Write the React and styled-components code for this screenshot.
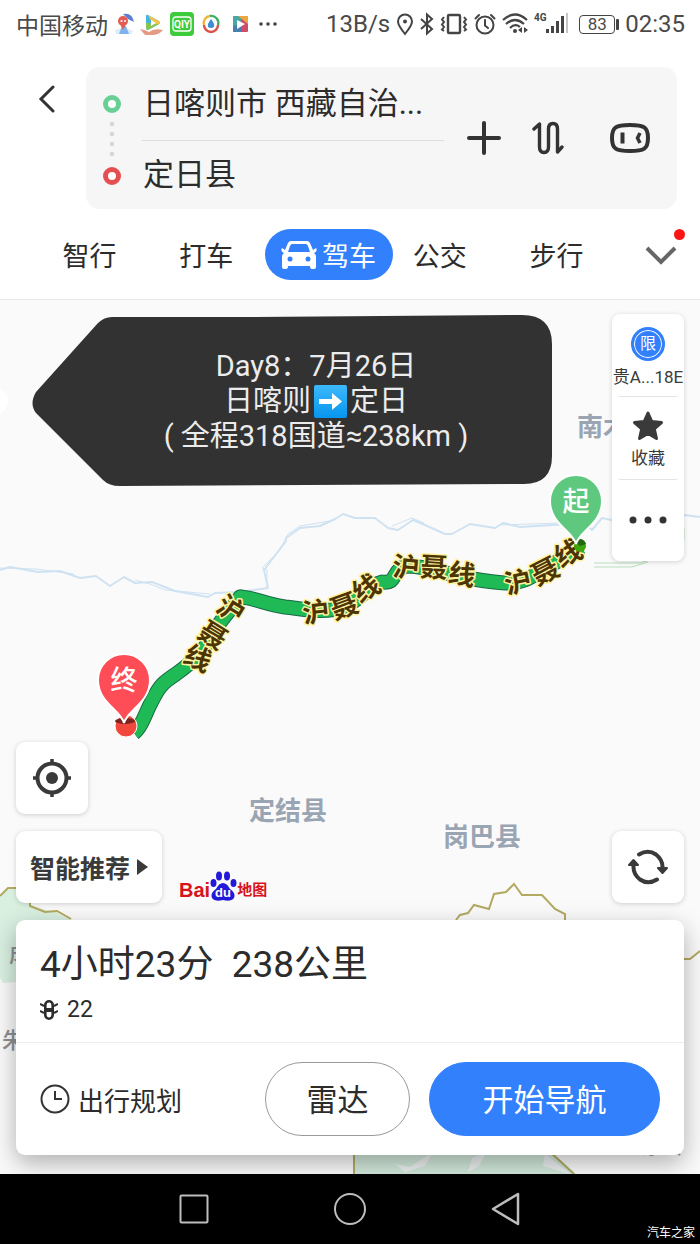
import React from "react";
import styled, { createGlobalStyle } from "styled-components";

const Global = createGlobalStyle`
  * { box-sizing: border-box; }
  body {
    margin: 0;
    background: #fff;
    color: #2c2c2c;
    font-family: Roboto, "Noto Sans CJK SC", sans-serif;
    font-weight: 400;
  }
  button, input { font: inherit; color: inherit; }
  button { padding: 0; border: 0; background: none; cursor: pointer; }
  svg { display: block; flex: none; }
`;

const Page = styled.div`
  display: flex;
  flex-direction: column;
  min-height: 100vh;
`;

/* ---------- header ---------- */

const Header = styled.header`
  background: #fff;
  border-bottom: 1px solid #e6e6e6;
  padding-bottom: 19px;
`;

const StatusBar = styled.div`
  display: flex;
  align-items: center;
  justify-content: space-between;
  height: 48px;
  padding: 0 15px 0 16px;
  font-size: 24px;
  color: #4a4a4a;
`;

const StatusGroup = styled.div`
  display: flex;
  align-items: center;
  gap: 6px;
`;

const Carrier = styled.span`
  font-size: 23px;
`;

const Battery = styled.span`
  position: relative;
  width: 36px;
  height: 19px;
  margin: 0 4px 0 3px;
  border: 1px solid #444;
  border-radius: 4px;
  font-size: 17px;
  line-height: 17px;
  text-align: center;
  &::after {
    content: "";
    position: absolute;
    top: 3px;
    right: -5px;
    width: 3px;
    height: 11px;
    background: #444;
    border-radius: 1px;
  }
`;

const SearchRow = styled.div`
  display: flex;
  align-items: flex-start;
  padding: 19px 23px 0 32px;
`;

const BackButton = styled.button`
  width: 30px;
  height: 64px;
  display: grid;
  place-items: center;
`;

const RouteBox = styled.form`
  flex: 1;
  min-width: 0;
  display: flex;
  align-items: center;
  height: 142px;
  margin-left: 24px;
  padding: 0 26px 0 16px;
  background: #f6f6f6;
  border-radius: 14px;
`;

const Fields = styled.div`
  flex: 1;
  min-width: 0;
  margin: 0 23px 0 20px;
`;

const PlaceInput = styled.input`
  display: block;
  width: 100%;
  height: 73px;
  padding: 0 0 7px 1px;
  border: 0;
  outline: 0;
  background: none;
  font-size: 31px;
  text-overflow: ellipsis;
  & + & {
    height: 69px;
    border-top: 1px solid #dedede;
  }
`;

const BoxActions = styled.div`
  display: grid;
  grid-template-columns: 34px 32px 56px;
  column-gap: 31px;
  align-items: center;
  & > :last-child { justify-self: end; }
`;

const IconButton = styled.button`
  display: grid;
  place-items: center;
`;

const Tabs = styled.nav`
  display: grid;
  grid-template-columns: repeat(5, minmax(0, 1fr)) 85px;
  align-items: center;
  height: 51px;
  margin-top: 20px;
  padding-left: 31px;
`;

const Tab = styled.button`
  display: flex;
  align-items: center;
  justify-content: center;
  gap: 5px;
  width: ${(p) => (p.$active ? "128px" : "100%")};
  height: 51px;
  border-radius: 26px;
  font-size: 27px;
  color: ${(p) => (p.$active ? "#fff" : "#2c2c2c")};
  background: ${(p) => (p.$active ? "#3280fc" : "transparent")};
`;

const MoreTab = styled.button`
  position: relative;
  display: grid;
  place-items: center;
  width: 40px;
  height: 51px;
  margin-left: 26px;
`;

const RedDot = styled.span`
  position: absolute;
  top: 0;
  right: -4px;
  width: 11px;
  height: 11px;
  border-radius: 50%;
  background: #fb1414;
`;

/* ---------- map ---------- */

const MapArea = styled.main`
  position: relative;
  flex: 1;
  display: flex;
  flex-direction: column;
  justify-content: space-between;
  gap: 120px;
  padding: 14px 16px 19px;
  background: #fafafa;
  overflow: hidden;
`;

const MapCanvas = styled.svg`
  position: absolute;
  inset: 0;
  width: 100%;
  height: 100%;
`;

const TopOverlay = styled.div`
  position: relative;
  display: flex;
  justify-content: space-between;
  align-items: flex-start;
  padding-left: 16px;
`;

const Callout = styled.section`
  position: relative;
  width: 520px;
  height: 172px;
  padding: 35px 0 0 48px;
  color: #ececec;
  font-size: 29px;
  line-height: 35px;
  text-align: center;
`;

const CalloutShape = styled.svg`
  position: absolute;
  inset: 0;
`;

const CalloutLine = styled.div`
  position: relative;
  display: flex;
  align-items: center;
  justify-content: center;
  gap: 3px;
  white-space: pre;
`;

const SidePanel = styled.aside`
  width: 72px;
  height: 247px;
  display: grid;
  grid-template-rows: repeat(3, minmax(0, 1fr));
  justify-items: center;
  background: #fff;
  border-radius: 8px;
  box-shadow: 0 1px 5px rgba(0, 0, 0, 0.16);
`;

const SideItem = styled.button`
  display: flex;
  flex-direction: column;
  align-items: center;
  justify-content: center;
  gap: 3px;
  width: 58px;
  font-size: 17px;
  line-height: 26px;
  white-space: nowrap;
  color: #3a3a3a;
  &:not(:last-child) { padding-top: 6px; }
  & + & { border-top: 1px solid #e4e4e4; }
`;

const LimitBadge = styled.span`
  display: grid;
  place-items: center;
  width: 34px;
  height: 34px;
  border-radius: 50%;
  border: 3px solid #3280fc;
  background: #3280fc;
  box-shadow: inset 0 0 0 1px #fff;
  color: #fff;
  font-size: 16px;
  line-height: 1;
`;

const BottomOverlay = styled.div`
  position: relative;
  display: flex;
  flex-direction: column;
  gap: 17px;
`;

const ToolRow = styled.div`
  display: flex;
  align-items: flex-end;
  gap: 17px;
`;

const FloatButton = styled.button`
  display: flex;
  align-items: center;
  justify-content: center;
  gap: 7px;
  width: ${(p) => (p.$wide ? "146px" : "72px")};
  height: 72px;
  background: #fff;
  border-radius: 9px;
  box-shadow: 0 1px 5px rgba(0, 0, 0, 0.18);
  font-size: 25px;
  font-weight: 700;
  color: #3a3a3a;
  ${(p) => p.$end && "margin-left: auto;"}
`;

const Logo = styled.div`
  display: flex;
  align-items: flex-end;
  height: 32px;
  margin-bottom: 2px;
  color: #d7141a;
  font-family: "Liberation Sans", "Noto Sans CJK SC", sans-serif;
  font-weight: 700;
  font-size: 20px;
  line-height: 22px;
`;

const LogoMap = styled.span`
  font-size: 15px;
`;

const TripCard = styled.section`
  background: #fff;
  border-radius: 9px;
  box-shadow: 0 8px 24px rgba(0, 0, 0, 0.3);
`;

const TripSummary = styled.div`
  height: 123px;
  padding: 21px 24px 0;
  border-bottom: 1px solid #ececec;
`;

const TripTitle = styled.h1`
  margin: 0;
  font-size: 37px;
  font-weight: 400;
  line-height: 48px;
  white-space: pre;
`;

const Lights = styled.p`
  display: flex;
  align-items: center;
  gap: 9px;
  margin: 8px 0 0;
  font-size: 23px;
  line-height: 26px;
`;

const TripActions = styled.div`
  display: flex;
  align-items: center;
  gap: 19px;
  padding: 19px 24px;
`;

const PlanButton = styled.button`
  display: flex;
  align-items: center;
  gap: 8px;
  margin-right: auto;
  font-size: 26px;
  white-space: nowrap;
`;

const PillButton = styled.button`
  width: ${(p) => (p.$primary ? "231px" : "145px")};
  height: 74px;
  padding-bottom: 4px;
  border-radius: 37px;
  border: 1px solid ${(p) => (p.$primary ? "#3280fc" : "#9a9a9a")};
  background: ${(p) => (p.$primary ? "#3280fc" : "#fff")};
  color: ${(p) => (p.$primary ? "#fff" : "#2c2c2c")};
  font-size: 31px;
`;

/* ---------- system navigation ---------- */

const SystemNav = styled.footer`
  position: relative;
  display: flex;
  align-items: center;
  justify-content: center;
  gap: 120px;
  height: 70px;
  background: #000;
`;

const NavButton = styled.button`
  display: grid;
  place-items: center;
  width: 36px;
  height: 36px;
`;

const Watermark = styled.span`
  position: absolute;
  right: 5px;
  bottom: 2px;
  color: #fff;
  font-size: 12px;
  line-height: 18px;
`;

/* ---------- drawings ---------- */

const AppIcons = () => (
  <>
    <svg width="20" height="24" viewBox="0 0 20 24">
      <path d="M9 2 Q18 0 20 10 L14 7Z" fill="#5b7fd0" />
      <path d="M1 18 Q10 14 19 19 L17 22 H2Z" fill="#dcecf8" />
      <path d="M8 14 h4 l3 8 h-10z" fill="#7fb2ee" />
      <circle cx="9" cy="9" r="5" fill="#e35b55" />
      <path d="M6 12h6l-3 6z" fill="#e35b55" />
      <circle cx="7.500" cy="9" r="1" fill="#fff" /><circle cx="11" cy="9" r="1" fill="#fff" />
    </svg>
    <svg width="24" height="24" viewBox="0 0 24 24">
      <path d="M6 4 Q6 2 8 3 L19 9 Q21 11 19 12 L8 18 Q6 18 6 16Z" fill="#45b5e8" />
      <path d="M8 3 L19 9 Q21 11 19 12 L14 14Z" fill="#f2c44c" />
      <path d="M6 11 L19 12 L8 18 Q6 18 6 16Z" fill="#8bc454" />
      <path d="M11 8l5 3-5 3z" fill="#fff" />
      <path d="M0 17 Q6 18 9 20 Q14 16 23 18 Q19 23 12 23 H5Z" fill="#e39b86" />
    </svg>
    <svg width="24" height="24" viewBox="0 0 24 24">
      <rect x="0" y="0" width="24" height="24" rx="4" fill="#3dcb3c" />
      <rect x="3" y="5" width="18" height="14" rx="3" fill="none" stroke="#fff" strokeWidth="1.3" />
      <text x="12" y="16" fontSize="10" fontWeight="700" fill="#fff" textAnchor="middle">QIY</text>
    </svg>
    <svg width="24" height="24" viewBox="-1 0 24 24">
      <path d="M3 13 A7 7 0 0 1 9 4" fill="none" stroke="#f0b33a" strokeWidth="2.4" />
      <path d="M9 4 A7 7 0 0 1 17 13" fill="none" stroke="#3bb06b" strokeWidth="2.4" />
      <path d="M17 13 A7 7 0 0 1 3 13" fill="none" stroke="#d9534a" strokeWidth="2.4" />
      <path d="M10 7 Q14 12 13 15 Q10 17 7 15 Q6 12 10 7" fill="#3d8fd4" />
    </svg>
    <svg width="22" height="24" viewBox="2 0 22 24">
      <rect x="5" y="4" width="15" height="16" rx="1" fill="#cf4d68" />
      <path d="M5 4h9l-2 8-7 8z" fill="#4aa7a6" />
      <path d="M10 4h10v8z" fill="#f0a63f" />
      <path d="M5 14l8-2v8H5z" fill="#4a7fae" />
      <path d="M9 8l8 4-8 5z" fill="#fff" />
    </svg>
    <svg width="20" height="24" viewBox="0 0 20 24" fill="#444">
      <circle cx="3" cy="12" r="1.8" /><circle cx="10" cy="12" r="1.8" /><circle cx="17" cy="12" r="1.8" />
    </svg>
  </>
);

const SignalIcons = () => (
  <>
    <svg width="18" height="24" viewBox="0 0 18 24" fill="none" stroke="#444" strokeWidth="2">
      <path d="M9 22 C5 17 2 13 2 9.500 A7 7 0 0 1 16 9.500 C16 13 13 17 9 22Z" />
      <circle cx="9" cy="9.500" r="2" fill="#444" stroke="none" />
    </svg>
    <svg width="14" height="24" viewBox="0 0 14 24" fill="none" stroke="#444" strokeWidth="2">
      <path d="M1 7 L12 17 L7 21.500 V2.500 L12 7 L1 17" />
    </svg>
    <svg width="28" height="24" viewBox="0 0 28 24" fill="none" stroke="#444" strokeWidth="2">
      <rect x="8" y="3" width="12" height="18" rx="1" strokeWidth="2.400" />
      <path d="M4 5 L2 7.500 L4 10 L2 12.500 L4 15 L2 17.500 L4 19 M24 5 L26 7.500 L24 10 L26 12.500 L24 15 L26 17.500 L24 19" />
    </svg>
    <svg width="22" height="24" viewBox="0 0 22 24" fill="none" stroke="#444" strokeWidth="2" strokeLinecap="round">
      <circle cx="11" cy="13" r="8.500" />
      <path d="M11 8v5.500l3 2.500M1.500 6.500L5 3M20.500 6.500L17 3" />
    </svg>
    <svg width="26" height="24" viewBox="0 0 26 24" fill="none" stroke="#444" strokeWidth="2.200">
      <path d="M1 8 Q13 -3 25 8M4 12 Q13 4 22 12M8 16 Q13 11 18 15" />
      <circle cx="13" cy="19" r="2" fill="#444" stroke="none" />
      <path d="M20 15v6l-4-3zM22 15v6l4-3z" fill="#444" stroke="none" />
    </svg>
    <svg width="36" height="24" viewBox="0 0 36 24" fill="#444">
      <text x="0" y="9" fontSize="10" fontWeight="700">4G</text>
      <rect x="12" y="17" width="3" height="4" /><rect x="17" y="14" width="3" height="7" />
      <rect x="22" y="9" width="3" height="12" /><rect x="27" y="4" width="3" height="17" />
      <rect x="32" y="1" width="2" height="20" fill="#c6c6c6" />
    </svg>
  </>
);

const roadLabels = [
  [231, 609, 32, "沪"], [213, 635, 32, "聂"], [198, 658, 24, "线"],
  [316, 612, -6, "沪"], [344, 606, -20, "聂"], [366, 588, -32, "线"],
  [406, 567, 5, "沪"], [434, 567, 3, "聂"], [462, 574, 10, "线"],
  [518, 582, -12, "沪"], [545, 571, -27, "聂"], [568, 553, -28, "线"],
];

const routePath =
  "M134 733 C142 727 146 711 153 699 C160 685 164 682 176 674 C190 664 205 651 212 635 C220 620 230 611 240 597 C252 597 265 604 285 607 C305 609 325 614 343 607 C362 600 368 585 382 582 C398 585 392 567 408 566 C430 566 450 576 472 579 C495 582 510 586 527 579 C548 569 565 555 582 547";

const Pin = ({ x, y, color, label }) => (
  <g transform={`translate(${x} ${y})`}>
    <path d="M0 43 C-3 30 -26 23 -26 0 A26 26 0 0 1 26 0 C26 23 3 30 0 43Z" fill={color} stroke="#fff" strokeWidth="2" />
    <text y="10" fontSize="27" fontWeight="500" fill="#fff" textAnchor="middle">{label}</text>
  </g>
);

const MapDrawing = () => (
  <MapCanvas viewBox="0 300 700 874" preserveAspectRatio="xMidYMin slice" role="img" aria-label="路线地图">
    <circle cx="-6" cy="401" r="14" fill="#fff" />
    <g fill="none" stroke="#cfe2f2" strokeWidth="2" strokeLinejoin="round">
      <path d="M0 570 L10 567 L38 572 L60 571 L80 578 L96 576 L110 586 L124 577 L135 583 L152 582 L175 591 L208 597 L215 593 L240 592 L268 588 L264 570 L286 541 L286 538 L300 528 L320 526 L335 519 L343 514 L355 518 L375 518 L388 528 L398 530 L413 520 L425 525 L445 534 L452 534 L470 524 L495 528 L503 523 L520 527 L585 523 L592 530 L602 518 L630 524 L684 515 L700 517" />
      <path d="M0 568 L36 569 L74 574 M135 580 L150 584 L165 590 L210 594 M267 588 L267 570 L262 568 L280 550 L288 534 L300 526 L330 521 M392 526 L412 518 L424 523 M500 525 L560 523" strokeWidth="1" />
    </g>
    <path d="M594 563 L640 563 L684 549 M594 567 L632 567 L648 562 M684 540 V528" fill="none" stroke="#b9dfbd" strokeWidth="1" />

    <path d="M0 897 L7 889 H30 V905 L57 913 L70 920 V978 L3 983 L0 978Z" fill="#d9f0e1" />
    <path d="M354 1150 H550 L576 1174 H354Z" fill="#d2e8db" />
    <path d="M395 1164 L410 1167 L433 1152 L425 1166 L405 1172Z M472 1158 L486 1152 L479 1166 L468 1172Z M545 1154 L570 1174 L543 1166Z" fill="#eceff0" />
    <g fill="none" stroke="#b3a960" strokeWidth="2">
      <path d="M0 896 L8 888 H30 V906 L45 912 L57 911 L71 919" />
      <path d="M456 920 L460 915 L468 913 L474 905 L489 909 L494 894 L506 892 L514 884 L522 895 L542 895 L555 909 L565 914 V920" />
      <path d="M684 959 H690 L700 951 M354 1150 V1174 M550 1152 L574 1174" />
    </g>
    <g fontSize="26" fontWeight="700" fill="#9aa5b3">
      <text x="577" y="436">南木林县</text>
      <text x="249" y="820">定结县</text>
      <text x="443" y="846">岗巴县</text>
    </g>
    <g fontSize="22" fontWeight="500" fill="#8d8f92">
      <text x="9" y="962">成</text>
      <text x="2" y="1048">朱</text>
      <text x="622" y="1154" fontSize="20">亚东县</text>
    </g>

    <g fill="none" strokeLinejoin="round" strokeLinecap="round">
      <path d={routePath} stroke="#176b45" strokeWidth="15" strokeLinecap="butt" />
      <circle cx="241" cy="597" r="7" fill="#1fb955" stroke="#176b45" strokeWidth="1" />
      <path d={routePath} stroke="#1fb955" strokeWidth="13" strokeLinecap="butt" />
    </g>
    {roadLabels.map(([x, y, r, t]) => (
      <text
        key={`${x}-${y}`}
        transform={`translate(${x} ${y}) rotate(${r})`}
        y="10"
        textAnchor="middle"
        fontSize="27"
        fontWeight="700"
        fill="#4d3404"
        stroke="#fff3a0"
        strokeWidth="3"
        strokeLinejoin="round"
        paintOrder="stroke"
      >
        {t}
      </text>
    ))}
    <circle cx="580" cy="546" r="6" fill="#3ea50c" />
    <path d="M580 546 L574 541 A7 7 0 0 1 586 544Z" fill="#23680c" />
    <Pin x={576} y={501} color="#5ec97e" label="起" />
    <circle cx="126" cy="726" r="11" fill="#f2473c" stroke="#fff" strokeWidth="1" />
    <ellipse cx="125" cy="721" rx="10" ry="3" fill="#7d2420" />
    <Pin x={124} y={680} color="#fe4d56" label="终" />
  </MapCanvas>
);

export default function App() {
  return (
    <Page>
      <Global />
      <Header>
        <StatusBar>
          <StatusGroup>
            <Carrier>中国移动</Carrier>
            <AppIcons />
          </StatusGroup>
          <StatusGroup>
            <span>13B/s</span>
            <SignalIcons />
            <Battery>83</Battery>
            <span>02:35</span>
          </StatusGroup>
        </StatusBar>

        <SearchRow>
          <BackButton aria-label="返回">
            <svg width="18" height="28" viewBox="0 0 18 28" fill="none" stroke="#333" strokeWidth="3" strokeLinecap="round">
              <path d="M15 2 L3 14 L15 26" />
            </svg>
          </BackButton>
          <RouteBox>
            <svg width="20" height="96" viewBox="0 0 20 96" fill="none">
              <circle cx="10" cy="14" r="6.500" fill="#fff" stroke="#68cf95" strokeWidth="5" />
              <g fill="#d6d6d6">
                <circle cx="10" cy="34" r="2.300" /><circle cx="10" cy="44" r="2.300" />
                <circle cx="10" cy="54" r="2.300" /><circle cx="10" cy="64" r="2.300" />
              </g>
              <circle cx="10" cy="86" r="6.500" fill="#fff" stroke="#e54f4f" strokeWidth="5" />
            </svg>
            <Fields>
              <PlaceInput aria-label="起点" defaultValue="日喀则市 西藏自治..." />
              <PlaceInput aria-label="终点" defaultValue="定日县" />
            </Fields>
            <BoxActions>
              <IconButton type="button" aria-label="添加途经点">
                <svg width="34" height="34" viewBox="0 0 34 34" stroke="#333" strokeWidth="4" strokeLinecap="round">
                  <path d="M17 2V32M2 17H32" />
                </svg>
              </IconButton>
              <IconButton type="button" aria-label="交换起终点">
                <svg width="32" height="34" viewBox="0 0 32 34" fill="none" stroke="#333" strokeWidth="3.400" strokeLinecap="round" strokeLinejoin="round">
                  <path d="M2 8 L7.500 3 V26 Q7.500 31.500 12 31.500 Q16.500 31.500 16.500 26 V8 Q16.500 2.500 21 2.500 Q25.500 2.500 25.500 8 V31 L30 26" />
                </svg>
              </IconButton>
              <IconButton type="button" aria-label="语音助手">
                <svg width="42" height="32" viewBox="0 0 42 32" fill="none" stroke="#333" strokeWidth="4">
                  <path d="M21 3 C35 3 39 5 39 16 C39 27 35 29 21 29 C7 29 3 27 3 16 C3 5 7 3 21 3Z" />
                  <path d="M13.500 10.500V21.500" />
                  <path d="M31 11 L28.500 16 L31 21" strokeWidth="3.500" />
                </svg>
              </IconButton>
            </BoxActions>
          </RouteBox>
        </SearchRow>

        <Tabs>
          <Tab>智行</Tab>
          <Tab>打车</Tab>
          <Tab $active>
            <svg width="36" height="30" viewBox="0 0 36 30">
              <path fill="#fff" fillRule="evenodd" d="M10 1 H26 Q28 1 29 3 L32 10 L35 8 Q37 11 33 13 Q35 14 35 17 V27 Q35 29 33 29 H31 Q29 29 29 26 H7 Q7 29 5 29 H3 Q1 29 1 27 V17 Q1 14 3 13 Q-1 11 1 8 L4 10 L7 3 Q8 1 10 1Z M11 4 Q10 4 9 6 L7 12 H29 L27 6 Q26 4 25 4Z" />
              <circle cx="9" cy="19" r="2.500" fill="#3280fc" /><circle cx="27" cy="19" r="2.500" fill="#3280fc" />
            </svg>
            驾车
          </Tab>
          <Tab>公交</Tab>
          <Tab>步行</Tab>
          <MoreTab aria-label="更多">
            <svg width="34" height="20" viewBox="0 0 34 20" fill="none" stroke="#666" strokeWidth="4">
              <path d="M3 3 L17 17 L31 3" />
            </svg>
            <RedDot />
          </MoreTab>
        </Tabs>
      </Header>

      <MapArea>
        <MapDrawing />
        <TopOverlay>
          <Callout>
            <CalloutShape width="520" height="173" viewBox="0 0 520 173">
              <path d="M80 3 H210 L490 1 Q520 1 520 30 V142 Q520 170 492 170 L88 172 Q77 172 71 166 L4 99 Q-3 90 4 78 L66 9 Q72 3 80 3Z" fill="#323232" />
            </CalloutShape>
            <CalloutLine>Day8：7月26日</CalloutLine>
            <CalloutLine>
              日喀则
              <svg width="33" height="33" viewBox="0 0 33 33" role="img" aria-label="➡">
                <defs>
                  <linearGradient id="arrowFill" x1="0" y1="0" x2="0" y2="1">
                    <stop offset="0" stopColor="#3db9fb" /><stop offset="1" stopColor="#0695ee" />
                  </linearGradient>
                </defs>
                <rect width="33" height="33" rx="2" fill="url(#arrowFill)" />
                <path d="M5 14H18V8L28 16.500L18 25V19H5Z" fill="#fff" />
              </svg>
              定日
            </CalloutLine>
            <CalloutLine>( 全程318国道≈238km )</CalloutLine>
          </Callout>

          <SidePanel>
            <SideItem>
              <LimitBadge>限</LimitBadge>
              贵A...18E
            </SideItem>
            <SideItem>
              <svg width="32" height="32" viewBox="0 0 32 32" fill="#3a3a3a" stroke="#3a3a3a" strokeWidth="3" strokeLinejoin="round">
                <path d="M16 3 L19.800 11.500 L29.500 12.500 L22.300 18.800 L24.500 28.500 L16 23.500 L7.500 28.500 L9.700 18.800 L2.500 12.500 L12.200 11.500Z" />
              </svg>
              收藏
            </SideItem>
            <SideItem aria-label="更多">
              <svg width="38" height="10" viewBox="0 0 38 10" fill="#333">
                <circle cx="4" cy="5" r="3.500" /><circle cx="19" cy="5" r="3.500" /><circle cx="34" cy="5" r="3.500" />
              </svg>
            </SideItem>
          </SidePanel>
        </TopOverlay>

        <BottomOverlay>
          <FloatButton aria-label="定位">
            <svg width="40" height="40" viewBox="0 0 40 40" fill="none" stroke="#3a3a3a">
              <circle cx="20" cy="20" r="14.500" strokeWidth="4" />
              <circle cx="20" cy="20" r="6" fill="#3a3a3a" stroke="none" />
              <path d="M20 1V6M20 34V39M1 20H6M34 20H39" strokeWidth="3.500" />
            </svg>
          </FloatButton>
          <ToolRow>
            <FloatButton $wide>
              智能推荐
              <svg width="11" height="18" viewBox="0 0 11 18" fill="#3a3a3a"><path d="M0 1L11 9L0 17Z" /></svg>
            </FloatButton>
            <Logo>
              Bai
              <svg width="27" height="30" viewBox="0 0 27 30" fill="#2319d8">
                <ellipse cx="9" cy="5" rx="3" ry="4.500" /><ellipse cx="17" cy="5" rx="3" ry="4.500" />
                <ellipse cx="3.500" cy="12" rx="3" ry="4" /><ellipse cx="23.500" cy="12" rx="3" ry="4" />
                <path d="M13 12 Q17 12 20 18 Q26 22 24 27 Q21 31 13 29 Q5 31 2 27 Q0 22 6 18 Q9 12 13 12Z" />
                <text x="13" y="26" fontSize="13" fill="#fff" textAnchor="middle">du</text>
              </svg>
              <LogoMap>地图</LogoMap>
            </Logo>
            <FloatButton $end aria-label="刷新">
              <svg width="40" height="36" viewBox="0 0 40 36" fill="none" stroke="#3a3a3a" strokeWidth="4" strokeLinecap="round">
                <path d="M11 5.500 Q20 0 28 5.500 Q35 11 34.500 19M29 30.500 Q20 36 12 30.500 Q5 25 5.500 17" />
                <path d="M30 19H39L34.500 24ZM1 16H10L5.500 11Z" fill="#3a3a3a" strokeWidth="2" strokeLinejoin="round" />
              </svg>
            </FloatButton>
          </ToolRow>

          <TripCard>
            <TripSummary>
              <TripTitle>4小时23分  238公里</TripTitle>
              <Lights>
                <svg width="18" height="20" viewBox="0 0 18 20" fill="none" stroke="#2c2c2c" strokeWidth="2.600">
                  <rect x="5.300" y="1.300" width="7.400" height="17.400" rx="3.700" />
                  <path d="M5 10H13" strokeWidth="4" />
                  <path d="M0 4L4 6M0 11L4 13M18 4L14 6M18 11L14 13" strokeWidth="2" />
                </svg>
                22
              </Lights>
            </TripSummary>
            <TripActions>
              <PlanButton>
                <svg width="30" height="30" viewBox="0 0 30 30" fill="none" stroke="#333" strokeWidth="2">
                  <circle cx="15" cy="15" r="13.500" /><path d="M15 7V15H22" />
                </svg>
                出行规划
              </PlanButton>
              <PillButton>雷达</PillButton>
              <PillButton $primary>开始导航</PillButton>
            </TripActions>
          </TripCard>
        </BottomOverlay>
      </MapArea>

      <SystemNav>
        <NavButton aria-label="最近任务">
          <svg width="30" height="30" viewBox="0 0 30 30" fill="none" stroke="#bdbdbd" strokeWidth="2">
            <rect x="1.500" y="1.500" width="27" height="27" rx="1" />
          </svg>
        </NavButton>
        <NavButton aria-label="主屏幕">
          <svg width="34" height="34" viewBox="0 0 34 34" fill="none" stroke="#bdbdbd" strokeWidth="2">
            <circle cx="17" cy="17" r="15" />
          </svg>
        </NavButton>
        <NavButton aria-label="后退">
          <svg width="30" height="34" viewBox="0 0 30 34" fill="none" stroke="#bdbdbd" strokeWidth="2.500" strokeLinejoin="round">
            <path d="M27 2V32L2 17Z" />
          </svg>
        </NavButton>
        <Watermark>汽车之家</Watermark>
      </SystemNav>
    </Page>
  );
}
